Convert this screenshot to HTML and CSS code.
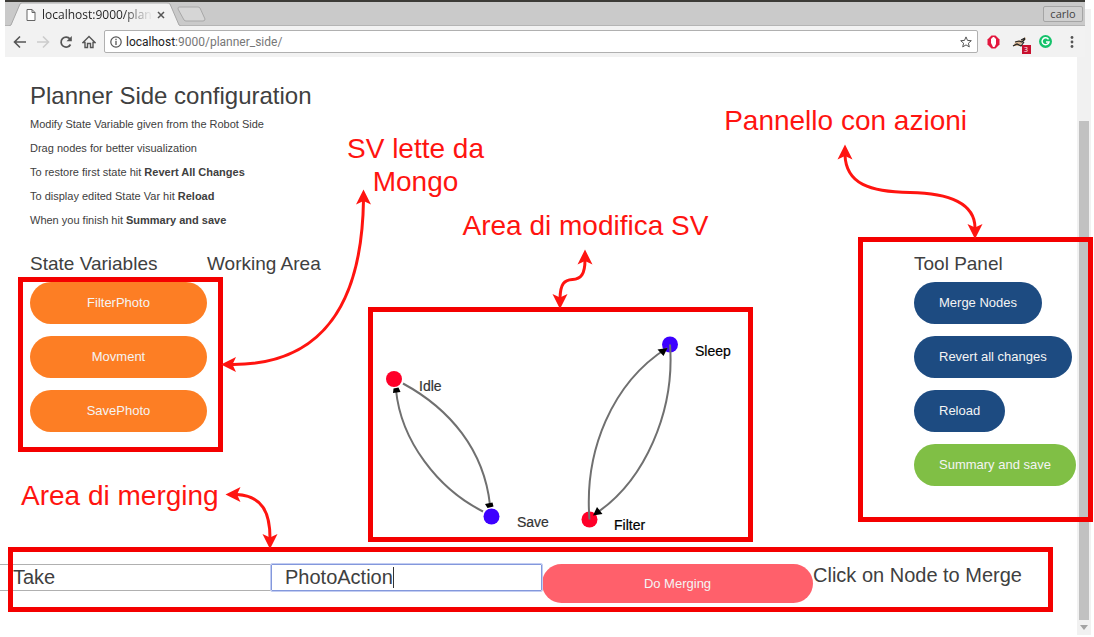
FILE: index.html
```html
<!DOCTYPE html>
<html lang="en">
<head>
<meta charset="utf-8">
<title>Planner Side configuration</title>
<link rel="stylesheet" href="styles.css">
</head>
<body>
<div class="page">
  <div class="scrollbar">
    <div class="scroll-thumb"></div>
    <svg class="scroll-down" width="8" height="5" viewBox="0 0 8 5"><path d="M0 0h8L4 5z" fill="#a3a3a3"/></svg>
  </div>

  <header class="browser">
    <div class="tabs">
      <div class="tab">
        <svg class="tab-shape" width="172" height="24" viewBox="0 0 172 24"><path d="M0 24L2 23L11 2Q12 1 13 1H158Q160 1 161 2L170 23L172 24" fill="#f2f2f2" stroke="#a8a8a8"/></svg>
        <svg width="10" height="12" viewBox="0 0 10 12"><path d="M1 .5h5l3 3v8H1zM6 .5v3h3" fill="#fff" stroke="#666"/></svg>
        <span class="tab-title">localhost:9000/plan</span>
        <svg width="8" height="8" viewBox="0 0 8 8"><path d="M1 1l6 6M7 1L1 7" stroke="#555" stroke-width="1.5"/></svg>
      </div>
      <svg class="new-tab" width="30" height="16" viewBox="0 0 30 16"><path d="M2 1h19q1 0 2 1l5 11q0 2-2 2H9q-1 0-2-1L1 3q0-2 1-2z" fill="#d6d6d6" stroke="#a8a8a8"/></svg>
      <button class="profile" type="button">carlo</button>
    </div>
    <div class="toolbar">
      <button class="icon" type="button" aria-label="Back"><svg width="14" height="14" viewBox="0 0 14 14"><path d="M13 7H2M7 1.500L1.500 7L7 12.500" fill="none" stroke="#555" stroke-width="1.600"/></svg></button>
      <button class="icon" type="button" aria-label="Forward"><svg width="14" height="14" viewBox="0 0 14 14"><path d="M1 7h11M7 1.500L12.500 7L7 12.500" fill="none" stroke="#ccc" stroke-width="1.600"/></svg></button>
      <button class="icon" type="button" aria-label="Reload page"><svg width="14" height="14" viewBox="0 0 14 14"><path d="M11.500 9.500A5 5 0 1 1 11 4" fill="none" stroke="#555" stroke-width="1.700"/><path d="M12.800 1v5.300H7.500z" fill="#555"/></svg></button>
      <button class="icon" type="button" aria-label="Home"><svg width="14" height="14" viewBox="0 0 14 14"><path d="M1 7.500L7 1.500L13 7.500H11V12.500H8.500V8.500H5.500V12.500H3V7.500z" fill="none" stroke="#555" stroke-width="1.400"/></svg></button>
      <div class="omnibox">
        <svg width="12" height="12" viewBox="0 0 12 12"><circle cx="6" cy="6" r="5.200" fill="none" stroke="#555" stroke-width="1.200"/><path d="M6 5v4M6 2.800v1.400" stroke="#555" stroke-width="1.300"/></svg>
        <span class="url"><b>localhost</b>:9000/planner_side/</span>
        <svg width="12" height="12" viewBox="0 0 12 12"><path d="M6 .9l1.500 3.500 3.800.3-2.900 2.500.9 3.700L6 8.900l-3.300 2 .9-3.700L.7 4.700l3.800-.3z" fill="none" stroke="#555"/></svg>
      </div>
      <div class="extensions">
        <svg width="13" height="14" viewBox="0 0 13 14"><path d="M4.500 .5h4l4 4v5l-4 4h-4l-4-4v-5z" fill="#e3173e"/><path d="M4 8V4l1-1 1-1h1l1 1 1 1v5l-1.500 3H6z" fill="#fff"/></svg>
        <svg width="19" height="18" viewBox="0 0 19 18"><path d="M1 10L4 5l6-1 3-3 1 2-3 3-3 4H5z" fill="#d7b695"/><path d="M3 6l4-1 3 1 3-3M1 10l4-2 4 2 3-4M9 4l4-2" stroke="#222" stroke-width="1.200" fill="none"/><rect x="10" y="9" width="9" height="9" fill="#c8102e"/><text x="12" y="16" class="badge-text">3</text></svg>
        <svg width="13" height="13" viewBox="0 0 13 13"><circle cx="6.500" cy="6.500" r="6.500" fill="#15c26b"/><path d="M9.500 4.300A3.500 3.500 0 1 0 10 7H7" fill="none" stroke="#fff" stroke-width="1.500"/></svg>
        <svg width="4" height="12" viewBox="0 0 4 12" fill="#555"><circle cx="2" cy="1.500" r="1.400"/><circle cx="2" cy="6" r="1.400"/><circle cx="2" cy="10.500" r="1.400"/></svg>
      </div>
    </div>
  </header>

  <main>
    <section class="intro">
      <h1>Planner Side configuration</h1>
      <p>Modify State Variable given from the Robot Side</p>
      <p>Drag nodes for better visualization</p>
      <p>To restore first state hit <b>Revert All Changes</b></p>
      <p>To display edited State Var hit <b>Reload</b></p>
      <p>When you finish hit <b>Summary and save</b></p>
    </section>

    <div class="columns">
      <section class="panel variables">
        <h2>State Variables</h2>
        <div class="stack">
          <button class="pill orange" type="button">FilterPhoto</button>
          <button class="pill orange" type="button">Movment</button>
          <button class="pill orange" type="button">SavePhoto</button>
        </div>
        <div class="frame"></div>
        <div class="note variables-note">SV lette da<br>Mongo</div>
        <svg class="arrow variables-arrow" width="170" height="190" viewBox="210 185 170 190"><path d="M363.500 200C362 300 325 365 232 364.500"/><path class="head" d="M363.500 189.500l7.500 15-7.500-3.500-7.500 3.500zM221 364.500l15-7.500-3.500 7.500 3.500 7.500z"/></svg>
      </section>

      <section class="panel working">
        <h2>Working Area</h2>
        <svg class="graph" viewBox="373 312 375 225">
          <circle cx="394" cy="379" r="8" fill="#ff0029"/>
          <circle cx="491.500" cy="516.500" r="8" fill="#3d00ff"/>
          <circle cx="670" cy="344.500" r="8" fill="#3d00ff"/>
          <circle cx="589.500" cy="519.500" r="8" fill="#ff0029"/>
          <g class="edges">
            <path d="M403 383.500C450 409 484 450 490 505"/>
            <path d="M483 511.500C438 489 401 441 396 390"/>
            <path d="M589.500 519.500C584 451 612 383 667 348"/>
            <path d="M670 344.500C675 411 645 481 595 514"/>
          </g>
          <path d="M393.500 388.500l5-1 2 4.500-7.500 1zM485 504l7.500-1.500 1 4-6 1.500zM657.500 349.500l10-1.500-4 8zM597 507l5.500 7-9.500 1.500z"/>
          <g class="labels">
            <text x="419" y="391" class="muted">Idle</text>
            <text x="517" y="527" class="muted">Save</text>
            <text x="695" y="356">Sleep</text>
            <text x="614" y="530">Filter</text>
          </g>
        </svg>
        <div class="note working-note">Area di modifica SV</div>
        <svg class="arrow working-arrow" width="50" height="64" viewBox="550 246 50 64"><path d="M585 260C585 274 581 279 572.500 279.500S560.500 284 560 298"/><path class="head" d="M585 249.500l7.500 15-7.500-3.500-7.500 3.500zM560 309l7.500-15-7.500 3.500-7.500-3.500z"/></svg>
      </section>

      <section class="panel tools">
        <h2>Tool Panel</h2>
        <div class="stack">
          <button class="pill blue" type="button">Merge Nodes</button>
          <button class="pill blue" type="button">Revert all changes</button>
          <button class="pill blue" type="button">Reload</button>
          <button class="pill green" type="button">Summary and save</button>
        </div>
        <div class="frame"></div>
        <div class="note tools-note">Pannello con azioni</div>
        <svg class="arrow tools-arrow" width="150" height="100" viewBox="835 140 150 100"><path d="M845 155C846 184 870 192 910 192.500S975 204 975 228"/><path class="head" d="M845 144.500l7.500 15-7.500-3.500-7.500 3.500zM975 239l7.500-15-7.500 3.500-7.500-3.500z"/></svg>
      </section>
    </div>

    <form class="merge">
      <input class="field" type="text" value="Take" aria-label="First name">
      <div class="active-field"><input class="field" type="text" value="PhotoAction" aria-label="Second name"></div>
      <button class="pill pink" type="button">Do Merging</button>
      <p>Click on Node to Merge</p>
      <div class="frame"></div>
      <div class="note merge-note">Area di merging</div>
      <svg class="arrow merge-arrow" width="60" height="64" viewBox="222 485 60 64"><path d="M237 494.500C262 496 270 512 270 538"/><path class="head" d="M225.500 494.500l15-7.500-3.500 7.500 3.500 7.500zM270 549l7.500-15-7.500 3.500-7.500-3.500z"/></svg>
    </form>
  </main>
</div>
</body>
</html>
```
FILE: styles.css
```css
* { box-sizing: border-box; }

body {
  margin: 0;
  background: #fff;
  color: #404040;
  font-family: "Liberation Sans", Arial, sans-serif;
}

h1, h2, p { margin: 0; font-weight: 400; }
button, input { font: inherit; }
svg { display: block; flex: none; }

.page {
  position: relative;
  min-height: 100vh;
  overflow: hidden;
}

/* Browser scrollbar along the right edge */
.scrollbar {
  position: absolute;
  top: 9px;
  right: 3px;
  bottom: 2px;
  width: 14px;
  padding-top: 112px;
  display: flex;
  flex-direction: column;
  align-items: center;
  background: #f1f1f1;
}
.scroll-thumb { flex: 1; width: 10px; background: #c1c1c1; }
.scroll-down { margin: 5px 0; }

/* Browser window header */
.browser {
  position: relative;
  margin: 0 9px 0 5px;
  border-top: 2px solid #3c3b37;
  background: #f2f2f2;
  font-family: "Open Sans", "Noto Sans", sans-serif;
  font-size: 12px;
}
.tabs {
  display: flex;
  align-items: center;
  height: 24px;
  padding-right: 2px;
  background: #cacaca;
  border-bottom: 1px solid #b4b4b4;
}
.tab {
  position: relative;
  display: flex;
  align-items: center;
  width: 172px;
  height: 24px;
  margin-left: 4px;
  padding: 2px 12px 0 17px;
  gap: 6px;
}
.tab > * { position: relative; }
.tab .tab-shape { position: absolute; top: 0; left: 0; }
.tab-title {
  width: 109px;
  overflow: hidden;
  white-space: nowrap;
  color: transparent;
  background: linear-gradient(90deg, #222 75%, #ddd 98%);
  background-clip: text;
}
.new-tab { margin-left: -4px; }
.profile {
  width: 40px;
  height: 16px;
  margin-left: auto;
  padding: 0;
  border: 1px solid #a5a5a5;
  border-radius: 2px;
  background: #d0d0d0;
  color: #444;
  font-size: 11px;
  line-height: 12px;
}
.toolbar {
  display: flex;
  align-items: center;
  height: 31px;
  padding: 0 11px 0 8px;
}
.icon {
  width: 14px;
  height: 14px;
  margin-right: 9px;
  padding: 0;
  border: 0;
  background: none;
}
.omnibox {
  flex: 1;
  display: flex;
  align-items: center;
  gap: 4px;
  height: 23px;
  margin-right: 9px;
  margin-left: -1px;
  padding: 0 5px;
  border: 1px solid #b0b0b0;
  border-radius: 2px;
  background: #fff;
}
.url { flex: 1; color: #777; font-family: Roboto, sans-serif; }
.url b { color: #222; font-weight: 400; }
.extensions { display: flex; align-items: center; gap: 12px; }
.extensions svg:nth-child(2) { margin-top: 6px; }
.extensions svg:nth-child(3) { margin-left: -4px; }
.extensions svg:nth-child(4) { margin-left: 6px; }
.badge-text { font-size: 7px; fill: #fff; }

/* Page content */
main { padding-top: 23px; }
.intro { padding-left: 30px; }
h1 { font-size: 24px; line-height: 32px; }
.intro p { font-size: 11px; line-height: 24px; }

.columns {
  display: grid;
  grid-template-columns: 177px 1fr 161px;
  align-items: start;
  padding: 20px 19px 0 30px;
}
.panel { position: relative; }
h2 { margin-bottom: 6px; font-size: 19px; line-height: 24px; }

.stack { display: flex; flex-direction: column; gap: 12px; }
.tools .stack { align-items: flex-start; }
.pill {
  height: 42px;
  padding: 0 25px 2px;
  border: 0;
  border-radius: 21px;
  color: #f4f4f4;
  font-size: 13px;
  white-space: nowrap;
}
.orange { background: #fd7e24; }
.blue { background: #1d4b81; }
.green { background: #80bf45; }
.pink { height: 39px; padding-bottom: 0; background: #ff606b; }

/* Node graph */
.graph {
  width: 385px;
  height: 235px;
  margin: 31px auto 0;
  border: 5px solid #f40000;
}
.working h2 { margin-bottom: 0; }
.edges path { fill: none; stroke: #707070; stroke-width: 2px; }
.labels { font-size: 14px; fill: #000; stroke: #000; stroke-width: 0.2px; }
.labels .muted { fill: #333; stroke: #333; }

/* Merge form */
.merge {
  position: relative;
  display: grid;
  grid-template-columns: repeat(4, 1fr);
  align-items: start;
  margin: 22px 10px 25px 0;
  font-size: 20px;
}
.field {
  display: block;
  width: 100%;
  height: 27px;
  padding: 0 13px;
  border: 1px solid #b0b0b0;
  border-width: 1px 0;
  background: #fff;
  color: #404040;
}
.active-field { position: relative; }
.active-field .field {
  border: 1px solid #8398dc;
  outline: 1px solid #c3cdf2;
  border-radius: 1px;
}
.active-field::after {
  content: "";
  position: absolute;
  top: 3px;
  left: 122px;
  width: 1px;
  height: 21px;
  background: #333;
}
.merge p { line-height: 22px; }

/* Red annotations lying over the page */
.frame {
  position: absolute;
  border: 5px solid #f40000;
  pointer-events: none;
}
.variables .frame { inset: 25px -16px -20px -12px; }
.tools .frame { inset: -15px -18px -36px -56px; }
.merge .frame { inset: -17px 31px -9px 8px; }

.note {
  position: absolute;
  color: #ff1410;
  font-size: 28px;
  line-height: 33px;
  text-align: center;
  white-space: nowrap;
}
.variables-note { top: -120px; left: 317px; }
.working-note { top: -43px; left: calc(50% - 98px); }
.tools-note { top: -148px; right: 108px; }
.merge-note { top: -85px; left: 21px; }

.arrow {
  position: absolute;
  fill: none;
  stroke: #ff1410;
  stroke-width: 3px;
  pointer-events: none;
}
.arrow .head { fill: #ff1410; stroke: none; }
.variables-arrow { top: -67px; left: 180px; }
.working-arrow { top: -6px; left: calc(50% - 11px); }
.tools-arrow { top: -112px; right: 90px; }
.merge-arrow { top: -79px; left: 222px; }
```
